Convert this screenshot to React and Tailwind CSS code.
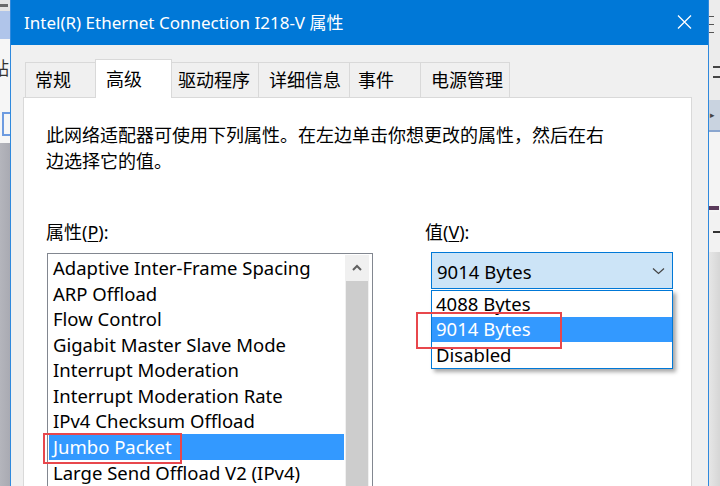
const props = [
  "Adaptive Inter-Frame Spacing",
  "ARP Offload",
  "Flow Control",
  "Gigabit Master Slave Mode",
  "Interrupt Moderation",
  "Interrupt Moderation Rate",
  "IPv4 Checksum Offload",
  "Jumbo Packet",
  "Large Send Offload V2 (IPv4)",
];

const tabs = [
  { label: "常规", w: "w-[71px]", pl: "pl-[9px]" },
  { label: "高级", w: "w-[77px]", pl: "pl-[10px]", active: true },
  { label: "驱动程序", w: "w-[88px]", pl: "pl-[6px]" },
  { label: "详细信息", w: "w-[92px]", pl: "pl-[10px]" },
  { label: "事件", w: "w-[72px]", pl: "pl-[8px]" },
  { label: "电源管理", w: "w-[90px]", pl: "pl-[10px]" },
];

const font = { fontFamily: '"Noto Sans", "Noto Sans CJK SC", sans-serif' };

const LeftBehind = () => (
  <div className="w-[10px] shrink-0 flex flex-col overflow-hidden">
    <div className="h-[11px] bg-[#e4e4e4] relative">
      <div className="absolute left-0 top-[4px] w-[8px] h-[3px] bg-[#6a6a6a]" />
    </div>
    <div className="h-[28px] bg-[#b0c5ea]" />
    <div className="h-[104px] bg-[#f6f6f6] flex flex-col">
      <div className="mt-[19px] -ml-[9px] text-[18px] leading-[20px] text-[#333]">贴</div>
      <div className="mt-[34px] ml-[2px] w-[10px] h-[24px] border-2 border-r-0 border-[#6d9be0]" />
    </div>
    <div className="flex-1 bg-gradient-to-r from-[#b4b5bc] to-[#a9aab2]" />
  </div>
);

const RightBehind = () => (
  <div className="flex-1 flex flex-col overflow-hidden">
    <div className="h-[100px] bg-[#ececec] flex flex-col">
      <div className="mt-[16px] w-[5px] h-px bg-[#555]" />
      <div className="mt-[7px] w-[5px] h-px bg-[#555]" />
      <div className="mt-[7px] w-[5px] h-px bg-[#555]" />
      <div className="mt-[33px] ml-[4px] w-[8px] h-[2px] bg-[#444]" />
      <div className="mt-[8px] ml-[4px] w-[8px] h-[2px] bg-[#444]" />
    </div>
    <div className="h-[32px] bg-[#c9d3e0] border-b-2 border-[#8aa6cf] flex items-center">
      <span className="text-[9px] text-[#444] ml-px">▸</span>
    </div>
    <div className="h-[80px] bg-[#f4f4f4] flex flex-col">
      <div className="mt-[74px] h-[4px] w-[10px] bg-[#5a3a5a]" />
    </div>
    <div className="h-[40px] bg-[#f2f2f2] flex items-center">
      <div className="ml-[4px] w-[8px] h-[2px] bg-[#333]" />
    </div>
    <div className="flex-1 bg-gradient-to-r from-[#e6e6e6] to-[#d6d6d6]" />
  </div>
);

export default function App() {
  return (
    <div className="w-[720px] h-[486px] overflow-hidden flex bg-white" style={font}>
      <LeftBehind />
      <div className="w-[699px] shrink-0 border-x border-[#2f89dd] bg-[#f0f0f0] flex flex-col overflow-hidden">
        <div className="h-[45px] shrink-0 bg-[#0078d7] flex items-center justify-between pl-[13px] pr-[16px] text-white">
          <span className="text-[17px] leading-none">Intel(R) Ethernet Connection I218-V 属性</span>
          <svg width="15" height="14" viewBox="0 0 15 14" className="mt-[-1px]">
            <path d="M1 0.5 L14 13.5 M14 0.5 L1 13.5" stroke="#fff" strokeWidth="1.3" fill="none" />
          </svg>
        </div>

        <div className="flex-1 flex flex-col pl-[12px] pr-[16px] pt-[14px]">
          <div className="flex items-end ml-[3px] h-[38px]">
            {tabs.map((t) =>
              t.active ? (
                <div
                  key={t.label}
                  className={`${t.w} ${t.pl} h-[39px] relative top-px z-10 -ml-px bg-white border border-b-0 border-[#d9d9d9] flex items-center text-[18px] text-black`}
                >
                  {t.label}
                </div>
              ) : (
                <div
                  key={t.label}
                  className={`${t.w} ${t.pl} h-[35px] bg-[#f0f0f0] border border-b-0 border-[#d9d9d9] -ml-px flex items-center text-[18px] text-black`}
                >
                  {t.label}
                </div>
              )
            )}
          </div>

          <div className="flex-1 bg-white border border-[#d9d9d9] pl-[22px] pt-[24px] text-black">
            <p className="text-[18px] leading-[26px] w-[562px]">
              此网络适配器可使用下列属性。在左边单击你想更改的属性，然后在右边选择它的值。
            </p>

            <div className="flex mt-[45px]">
              <div className="w-[379px] shrink-0">
                <div className="text-[18px] leading-[26px]">
                  属性(<span className="underline underline-offset-2">P</span>):
                </div>
                <div className="relative ml-px mt-[8px] w-[326px] h-[240px] border border-b-0 border-[#828790] bg-white flex">
                  <div className="flex-1 p-px pt-[1px]">
                    {props.map((p) => (
                      <div
                        key={p}
                        className={`h-[25.6px] pl-[4px] flex items-center text-[18.5px] whitespace-nowrap ${
                          p === "Jumbo Packet" ? "bg-[#3399ff] text-white" : "text-black"
                        }`}
                      >
                        {p}
                      </div>
                    ))}
                  </div>
                  <div className="w-[24px] mr-[3px] mt-px flex flex-col bg-[#f0f0f0]">
                    <div className="h-[24px] flex items-center justify-center">
                      <svg width="10" height="7" viewBox="0 0 10 7">
                        <path d="M1 6 L5 2 L9 6" stroke="#606060" strokeWidth="2" fill="none" />
                      </svg>
                    </div>
                    <div className="mt-[2px] mx-px flex-1 bg-[#cdcdcd]" />
                  </div>
                  <div className="absolute left-[-5px] top-[179px] w-[139px] h-[31px] border-2 border-[#e8474c]" />
                </div>
              </div>

              <div className="flex-1">
                <div className="text-[18px] leading-[26px]">
                  值(<span className="underline underline-offset-2">V</span>):
                </div>
                <div className="relative ml-[6px] mt-[7px] w-[242px]">
                  <div className="h-[37px] border border-[#0078d7] bg-[#cce4f7] flex items-center justify-between pl-[5px] pr-[7px] text-[18.5px]">
                    <span className="mt-[2px]">9014 Bytes</span>
                    <svg width="13" height="8" viewBox="0 0 13 8">
                      <path d="M1 1.5 L6.5 6.5 L12 1.5" stroke="#444" strokeWidth="1.2" fill="none" />
                    </svg>
                  </div>
                  <div className="absolute left-0 top-[38px] w-[242px] border border-[#0078d7] bg-white shadow-[3px_3px_4px_rgba(0,0,0,0.35)] z-10">
                    <div className="h-[25.5px] pl-[4px] flex items-center text-[18.5px]">4088 Bytes</div>
                    <div className="h-[25.5px] pl-[4px] flex items-center text-[18.5px] bg-[#3399ff] text-white">9014 Bytes</div>
                    <div className="h-[25.5px] pl-[4px] flex items-center text-[18.5px]">Disabled</div>
                  </div>
                  <div className="absolute left-[-15px] top-[60px] w-[146px] h-[37px] border-2 border-[#e8474c] z-20" />
                </div>
              </div>
            </div>
          </div>
        </div>
      </div>
      <RightBehind />
    </div>
  );
}
